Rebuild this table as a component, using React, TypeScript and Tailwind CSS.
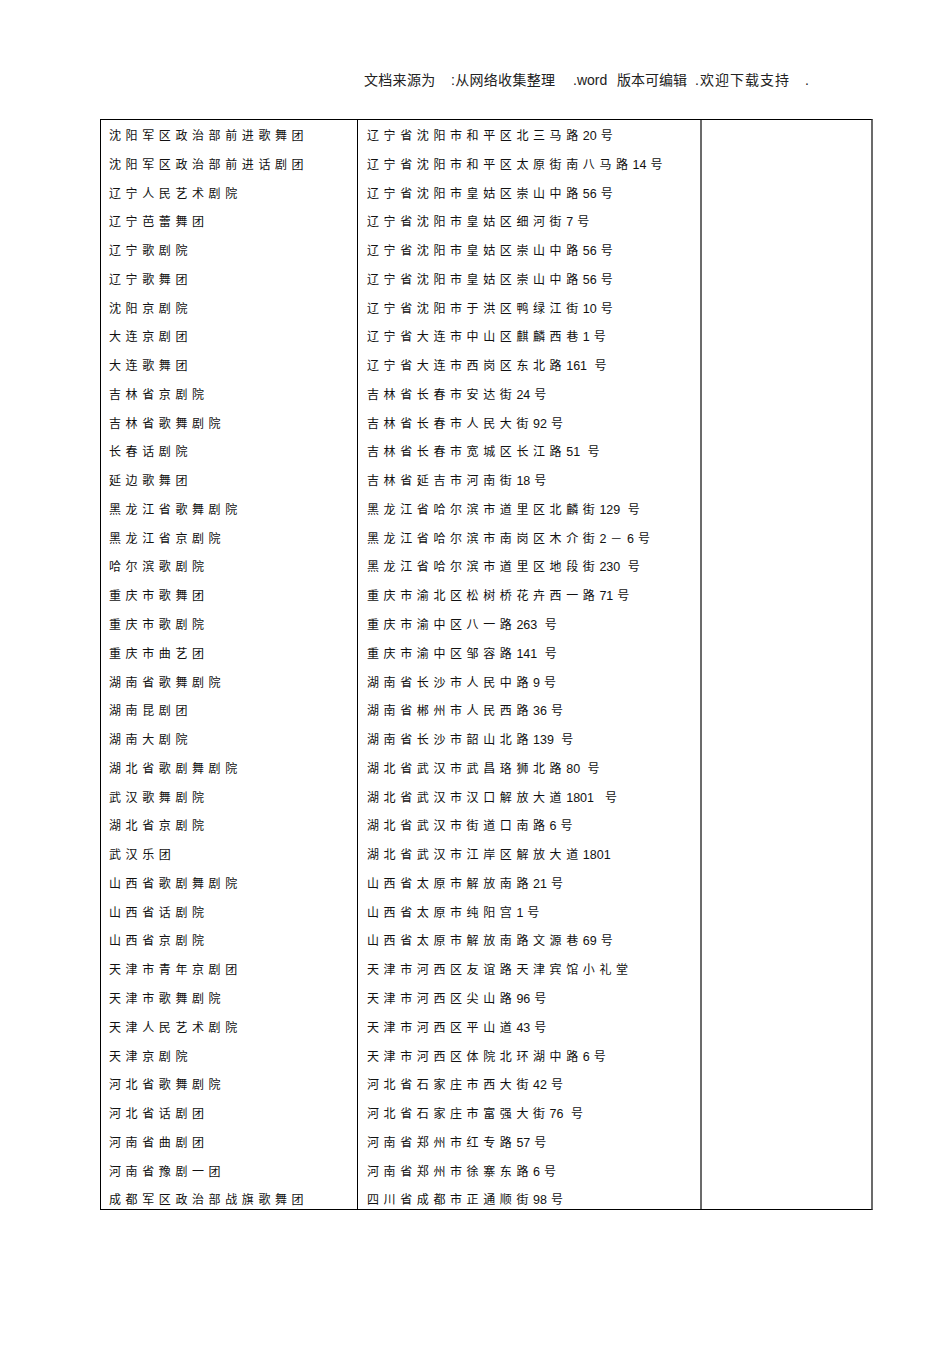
import React from "react";

const rows: [string, string][] = [
  ["沈阳军区政治部前进歌舞团", "辽宁省沈阳市和平区北三马路|20|号"],
  ["沈阳军区政治部前进话剧团", "辽宁省沈阳市和平区太原街南八马路|14|号"],
  ["辽宁人民艺术剧院", "辽宁省沈阳市皇姑区崇山中路|56|号"],
  ["辽宁芭蕾舞团", "辽宁省沈阳市皇姑区细河街|7|号"],
  ["辽宁歌剧院", "辽宁省沈阳市皇姑区崇山中路|56|号"],
  ["辽宁歌舞团", "辽宁省沈阳市皇姑区崇山中路|56|号"],
  ["沈阳京剧院", "辽宁省沈阳市于洪区鸭绿江街|10|号"],
  ["大连京剧团", "辽宁省大连市中山区麒麟西巷|1|号"],
  ["大连歌舞团", "辽宁省大连市西岗区东北路|161 |号"],
  ["吉林省京剧院", "吉林省长春市安达街|24|号"],
  ["吉林省歌舞剧院", "吉林省长春市人民大街|92|号"],
  ["长春话剧院", "吉林省长春市宽城区长江路|51 |号"],
  ["延边歌舞团", "吉林省延吉市河南街|18|号"],
  ["黑龙江省歌舞剧院", "黑龙江省哈尔滨市道里区北麟街|129 |号"],
  ["黑龙江省京剧院", "黑龙江省哈尔滨市南岗区木介街|2|－|6|号"],
  ["哈尔滨歌剧院", "黑龙江省哈尔滨市道里区地段街|230 |号"],
  ["重庆市歌舞团", "重庆市渝北区松树桥花卉西一路|71|号"],
  ["重庆市歌剧院", "重庆市渝中区八一路|263 |号"],
  ["重庆市曲艺团", "重庆市渝中区邹容路|141 |号"],
  ["湖南省歌舞剧院", "湖南省长沙市人民中路|9|号"],
  ["湖南昆剧团", "湖南省郴州市人民西路|36|号"],
  ["湖南大剧院", "湖南省长沙市韶山北路|139 |号"],
  ["湖北省歌剧舞剧院", "湖北省武汉市武昌珞狮北路|80 |号"],
  ["武汉歌舞剧院", "湖北省武汉市汉口解放大道|1801  |号"],
  ["湖北省京剧院", "湖北省武汉市街道口南路|6|号"],
  ["武汉乐团", "湖北省武汉市江岸区解放大道|1801|"],
  ["山西省歌剧舞剧院", "山西省太原市解放南路|21|号"],
  ["山西省话剧院", "山西省太原市纯阳宫|1|号"],
  ["山西省京剧院", "山西省太原市解放南路文源巷|69|号"],
  ["天津市青年京剧团", "天津市河西区友谊路天津宾馆小礼堂"],
  ["天津市歌舞剧院", "天津市河西区尖山路|96|号"],
  ["天津人民艺术剧院", "天津市河西区平山道|43|号"],
  ["天津京剧院", "天津市河西区体院北环湖中路|6|号"],
  ["河北省歌舞剧院", "河北省石家庄市西大街|42|号"],
  ["河北省话剧团", "河北省石家庄市富强大街|76 |号"],
  ["河南省曲剧团", "河南省郑州市红专路|57|号"],
  ["河南省豫剧一团", "河南省郑州市徐寨东路|6|号"],
  ["成都军区政治部战旗歌舞团", "四川省成都市正通顺街|98|号"],
];

function Cell({ text }: { text: string }) {
  const parts = text.split("|");
  return (
    <span className="whitespace-pre">
      {parts.map((p, i) =>
        i % 2 === 1 ? (
          <span key={i} className="tracking-normal mr-[4px] text-[12.5px]">
            {p}
          </span>
        ) : (
          <span key={i} className="tracking-[4.6px]">
            {p}
          </span>
        )
      )}
    </span>
  );
}

export default function App() {
  return (
    <div
      className="w-[950px] h-[1345px] bg-white text-[#111111]"
      style={{ fontFamily: '"Liberation Sans", "Noto Sans CJK SC", sans-serif' }}
    >
      <div className="pt-[70px] pl-[364px] h-[119px] text-[14px] text-[#222222] whitespace-nowrap leading-[20px] flex">
        <span className="w-[87px] tracking-[0.3px]">文档来源为</span>
        <span className="w-[122px] tracking-[0.3px]">:从网络收集整理</span>
        <span className="w-[44px]">.word</span>
        <span className="w-[78px]">版本可编辑</span>
        <span className="w-[110px] tracking-[1px]">.欢迎下载支持</span>
        <span>.</span>
      </div>
      <div className="ml-[100px] w-[773px] border-t-[1.5px] border-b-[1.5px] border-l border-r-2 border-t-black border-b-black border-l-black border-r-[#6b6b6b]">
        {rows.map(([a, b], i) => (
          <div
            key={i}
            className={
              i === rows.length - 1
                ? "flex h-[25px] text-[12px] leading-[28.78px]"
                : "flex h-[28.78px] text-[12px] leading-[28.78px]"
            }
          >
            <div className="w-[257px] pl-[8px] pt-[2px] border-r border-black">
              <span className="tracking-[4.6px]">{a}</span>
            </div>
            <div className="w-[344px] pl-[9px] pt-[2px] border-r-2 border-[#6b6b6b]">
              <Cell text={b} />
            </div>
            <div className="flex-1" />
          </div>
        ))}
      </div>
    </div>
  );
}
